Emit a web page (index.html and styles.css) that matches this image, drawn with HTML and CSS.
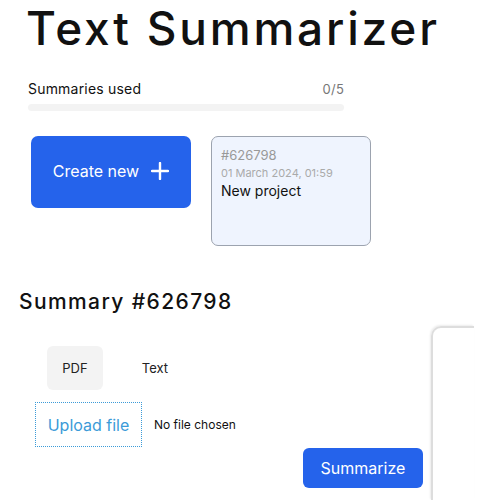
FILE: index.html
```html
<!DOCTYPE html>
<html>
<head>
<meta charset="utf-8">
<link rel="stylesheet" href="styles.css">
</head>
<body>
<div class="page">
  <h1 class="title">Text Summarizer</h1>
  <div class="usage">
    <div class="usage-row"><span>Summaries used</span><span class="count">0/5</span></div>
    <div class="bar"></div>
  </div>
  <div class="projects">
    <button class="create">Create new
      <svg width="18" height="18" viewBox="0 0 18 18"><path d="M9 1v16M1 9h16" stroke="#fff" stroke-width="2.4" stroke-linecap="round"/></svg>
    </button>
    <div class="card">
      <div class="id">#626798</div>
      <div class="date">01 March 2024, 01:59</div>
      <div class="name">New project</div>
    </div>
  </div>
  <h2 class="summary-title">Summary #626798</h2>
  <div class="workspace">
    <div class="form">
      <div class="tabs">
        <div class="tab active">PDF</div>
        <div class="tab">Text</div>
      </div>
      <div class="upload-row">
        <div class="upload">Upload file</div>
        <span class="nofile">No file chosen</span>
      </div>
      <div class="actions"><button class="summarize">Summarize</button></div>
    </div>
  </div>
</div>
<div class="panel"></div>
</body>
</html>
```
FILE: styles.css
```css
html, body { margin: 0; padding: 0; background: #fff; overflow: hidden; }
body { font-family: "Inter", "Noto Sans", sans-serif; color: #111; width: 500px; height: 500px; position: relative; }
.title { margin: 0; padding: 0 0 0 26px; font-family: "Inter", sans-serif; font-weight: 500; font-size: 46px; line-height: 56px; letter-spacing: 2.8px; white-space: nowrap; }
.usage { width: 316px; margin: 24px 0 0 28px; }
.usage-row { display: flex; justify-content: space-between; font-size: 14px; line-height: 18px; letter-spacing: 0.2px; }
.count { color: #777; font-size: 13px; }
.bar { height: 7px; background: #f3f3f3; border-radius: 4px; margin-top: 6px; }
.projects { display: flex; gap: 20px; margin: 25px 0 0 31px; align-items: flex-start; }
.create { width: 160px; height: 72px; background: #2563eb; color: #fff; border: none; border-radius: 7px; font-family: "Inter", sans-serif; font-size: 16px; display: flex; align-items: center; justify-content: center; gap: 12px; padding: 0 0 2px 0; }
.card { box-sizing: border-box; width: 160px; height: 110px; background: #eff4fe; border: 1px solid #9ca3af; border-radius: 7px; padding: 10px 9px; }
.id { color: #999; font-size: 13px; line-height: 16px; }
.date { color: #aaa; font-size: 11px; line-height: 14px; margin-top: 3px; }
.name { color: #111; font-size: 14px; line-height: 18px; margin-top: 2px; }
.summary-title { margin: 43px 0 0 19px; font-family: "Inter", sans-serif; font-weight: 500; font-size: 21px; line-height: 26px; letter-spacing: 1.4px; }
.workspace { margin-top: 31px; }
.form { width: 388px; padding-left: 35px; }
.tabs { display: flex; gap: 24px; padding-left: 12px; }
.tab { width: 56px; height: 44px; display: flex; align-items: center; justify-content: center; font-family: "Inter", sans-serif; font-size: 13px; color: #222; border-radius: 6px; }
.tab.active { background: #f3f3f3; }
.upload-row { display: flex; align-items: center; gap: 12px; margin-top: 12px; }
.upload { box-sizing: border-box; width: 107px; height: 45px; border: 1px dotted #3b9bd8; color: #3b9bd8; font-family: "Inter", sans-serif; font-size: 16px; display: flex; align-items: center; justify-content: center; }
.nofile { font-family: "Inter", sans-serif; font-size: 12px; color: #111; }
.actions { display: flex; justify-content: flex-end; margin-top: 1px; }
.summarize { width: 120px; height: 40px; background: #2563eb; color: #fff; border: none; border-radius: 6px; font-family: "Inter", sans-serif; font-size: 16px; }
.panel { position: absolute; left: 431px; top: 326px; width: 41px; height: 172px; border-top: 2px solid #ddd; border-left: 2px solid #ddd; border-top-left-radius: 10px; box-shadow: -1px -1px 2px rgba(0,0,0,0.08); }
```
